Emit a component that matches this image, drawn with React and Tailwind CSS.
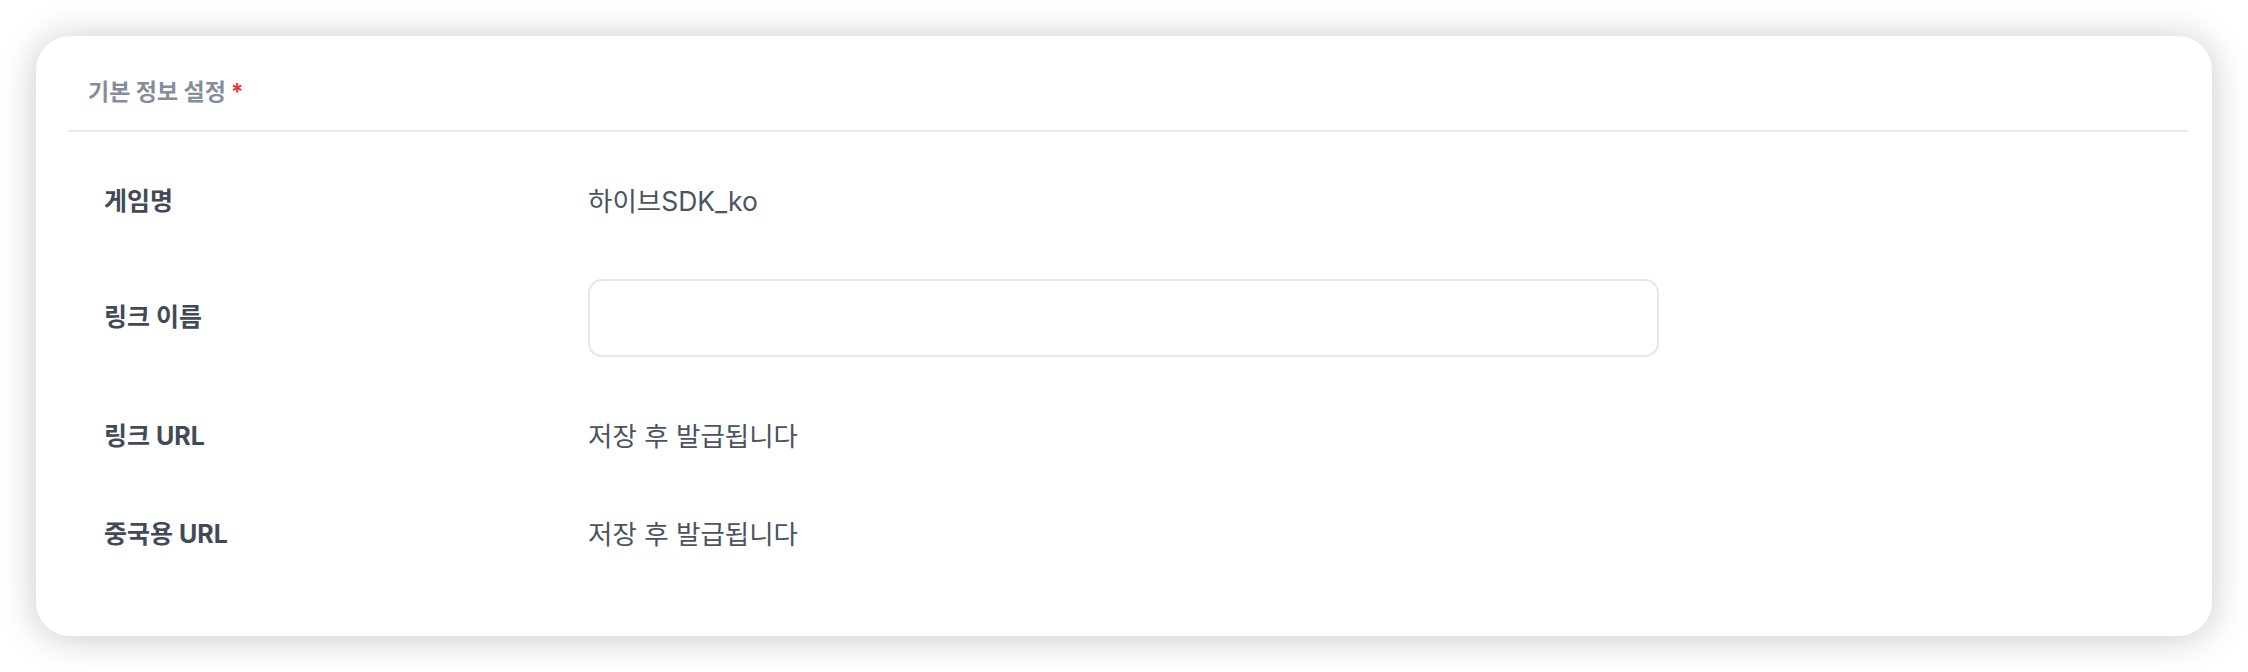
// ── Basic info settings card ─────────────────────────────────────────────────

const FONT = "font-['Inter','Noto_Sans_CJK_KR',sans-serif]";

function Row({ label, children, className = "" }) {
  return (
    <div className={`flex items-center ${className}`}>
      <div className="w-[520px] shrink-0 pl-[36px] text-[25px] font-bold text-[#424a58]">{label}</div>
      <div className="flex-1 text-[26.5px] text-[#4b5361]">{children}</div>
    </div>
  );
}

export default function App() {
  return (
    <div className={`min-h-screen bg-white p-[36px] ${FONT}`}>
      <div className="rounded-[34px] bg-white shadow-[0_2px_36px_rgba(0,0,0,0.22)] pl-[32px] pr-[24px] pb-[52px]">
        <div className="flex items-start h-[96px] pt-[41px] px-[20px] border-b-2 border-[#e8e8ee]">
          <span className="text-[23px] leading-[30px] font-bold text-[#858d9a]">기본 정보 설정</span>
          <span className="ml-[5px] text-[23px] leading-[30px] font-bold text-[#ef3340]">*</span>
        </div>

        <div className="pt-[23px]">
          <Row label="게임명" className="h-[93px]">하이브SDK_ko</Row>
          <Row label="링크 이름" className="h-[140px]">
            <input
              type="text"
              className="w-[1071px] h-[78px] rounded-[14px] border-2 border-[#e6e6ec] bg-white px-4 outline-none"
            />
          </Row>
          <Row label="링크 URL" className="h-[98px]">저장 후 발급됩니다</Row>
          <Row label="중국용 URL" className="h-[98px]">저장 후 발급됩니다</Row>
        </div>
      </div>
    </div>
  );
}
